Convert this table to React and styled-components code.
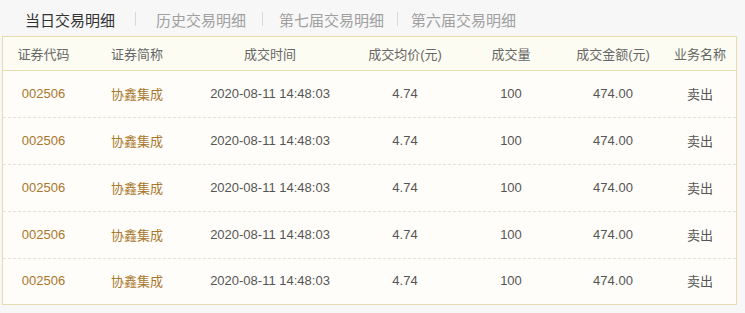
import React from "react";
import styled, { createGlobalStyle } from "styled-components";

const Global = createGlobalStyle`
  html, body {
    margin: 0;
    padding: 0;
    background: #f7f7f7;
    font-family: "Liberation Sans", "Noto Sans CJK SC", Arial, sans-serif;
  }
`;

const Page = styled.div`
  width: 745px;
  height: 313px;
  padding: 0 8px 0 2px;
  box-sizing: border-box;
`;

const Tabs = styled.div`
  display: flex;
  align-items: center;
  height: 36px;
  padding-left: 23px;
  padding-top: 2px;
  box-sizing: border-box;
`;

const Tab = styled.span`
  font-size: 15px;
  color: ${(p) => (p.active ? "#333" : "#a0a0a0")};
`;

const Sep = styled.span`
  width: 1px;
  height: 14px;
  background: #d8d8d8;
  margin: 0 ${(p) => p.gap}px;
`;

const Table = styled.div`
  border: 1px solid #e6dcb0;
  background: #fffdf9;
`;

const cols = "81px 106px 160px 110px 102px 102px 1fr";

const HeadRow = styled.div`
  display: grid;
  grid-template-columns: ${cols};
  height: 34px;
  padding-bottom: 1px;
  box-sizing: border-box;
  align-items: center;
  background: #fdfcf2;
  border-bottom: 1px solid #e6dcb0;
  font-size: 13px;
  color: #666;
`;

const Row = styled.div`
  display: grid;
  grid-template-columns: ${cols};
  height: ${(p) => p.h}px;
  padding-bottom: 2px;
  box-sizing: border-box;
  align-items: center;
  font-size: 13px;
  border-top: ${(p) => (p.first ? "none" : "1px dashed #e6e2da")};
`;

const Cell = styled.div`
  text-align: center;
  color: ${(p) => p.color || "#555"};
`;

const heads = ["证券代码", "证券简称", "成交时间", "成交均价(元)", "成交量", "成交金额(元)", "业务名称"];

const rows = Array.from({ length: 5 }, () => ({
  code: "002506",
  name: "协鑫集成",
  time: "2020-08-11 14:48:03",
  price: "4.74",
  vol: "100",
  amount: "474.00",
  type: "卖出",
}));

export default function App() {
  return (
    <Page>
      <Global />
      <Tabs>
        <Tab active>当日交易明细</Tab>
        <Sep gap={20} />
        <Tab>历史交易明细</Tab>
        <Sep gap={16} />
        <Tab>第七届交易明细</Tab>
        <Sep gap={13} />
        <Tab>第六届交易明细</Tab>
      </Tabs>
      <Table>
        <HeadRow>
          {heads.map((h) => (
            <Cell key={h} color="#666">{h}</Cell>
          ))}
        </HeadRow>
        {rows.map((r, i) => (
          <Row
            key={i}
            first={i === 0}
            h={i === 0 ? 46 : i === rows.length - 1 ? 46 : 47}
          >
            <Cell color="#a8772c">{r.code}</Cell>
            <Cell color="#a8772c">{r.name}</Cell>
            <Cell>{r.time}</Cell>
            <Cell>{r.price}</Cell>
            <Cell>{r.vol}</Cell>
            <Cell>{r.amount}</Cell>
            <Cell>{r.type}</Cell>
          </Row>
        ))}
      </Table>
    </Page>
  );
}
